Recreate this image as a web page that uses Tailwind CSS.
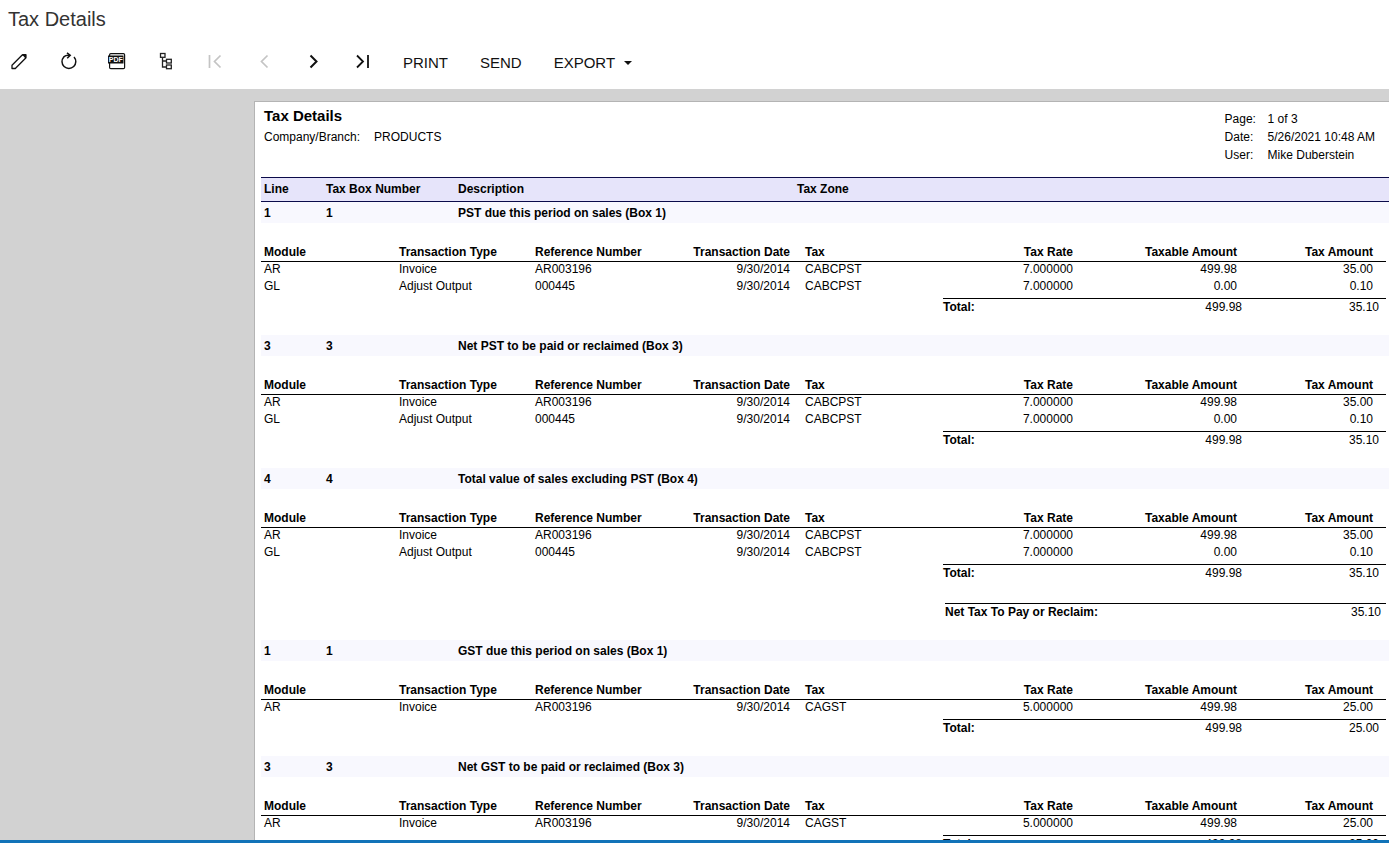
<!DOCTYPE html>
<html lang="en">
<head>
<meta charset="utf-8">
<meta name="viewport" content="width=device-width, initial-scale=1">
<title>Tax Details</title>
<script src="https://cdn.jsdelivr.net/npm/@tailwindcss/browser@4"></script>
</head>
<body class="flex h-screen flex-col overflow-hidden bg-white font-['Liberation_Sans',Arial,sans-serif] text-xs text-black">
<header class="flex h-[89px] shrink-0 flex-col">
  <h1 class="px-2 pt-1 text-xl leading-[30px] text-[#333]">Tax Details</h1>
  <div role="toolbar" aria-label="Report actions" class="mt-4 flex h-6 items-center gap-[25px] pl-[7px]">
    <button type="button" aria-label="Edit" class="size-6"><svg viewBox="0 0 24 24" class="size-6" fill="none" stroke="#111" stroke-width="1.300" stroke-linejoin="round"><path d="M5 18.500V15.200L15.200 5H18.500V8.300L8.300 18.500z"/><path d="M15.800 4.600L18.900 7.700V4.600z" fill="#111"/></svg></button>
    <button type="button" aria-label="Refresh" class="size-6"><svg viewBox="0 0 24 24" class="size-6" fill="none" stroke="#111" stroke-width="1.500"><path d="M18 6.900a6.900 6.900 0 1 1-10.200 0q1.700-1.700 5.200-1.600"/><path d="M11 2.800l3.200 2.500-3 2.900"/></svg></button>
    <button type="button" aria-label="View PDF" class="size-6"><svg viewBox="0 0 24 24" class="size-6"><rect x="4.600" y="3.600" width="15" height="15" rx="1.200" fill="#fff" stroke="#111" stroke-width="1.200"/><rect x="3" y="5.500" width="15.500" height="8" fill="#111"/><text x="10.800" y="12.200" text-anchor="middle" font-size="7" font-weight="700" fill="#fff">PDF</text></svg></button>
    <button type="button" aria-label="Groups" class="size-6"><svg viewBox="0 0 24 24" class="size-6" fill="none" stroke="#222" stroke-width="1.300"><rect x="6.500" y="3.500" width="4.500" height="3.800"/><path d="M8.500 7.500v9.500H12M8.500 11H12"/><rect x="12.500" y="9.300" width="4.800" height="3.700"/><rect x="12.500" y="15" width="4.800" height="3.700"/></svg></button>
    <button type="button" aria-label="First page" disabled class="size-6"><svg viewBox="0 0 24 24" class="size-6" fill="none" stroke="#c4c4c4" stroke-width="1.700"><path d="M6.500 5v13M17.500 5.500l-6 6 6 6"/></svg></button>
    <button type="button" aria-label="Previous page" disabled class="size-6"><svg viewBox="0 0 24 24" class="size-6" fill="none" stroke="#c4c4c4" stroke-width="1.700"><path d="M15.500 5.500l-6 6 6 6"/></svg></button>
    <button type="button" aria-label="Next page" class="size-6"><svg viewBox="0 0 24 24" class="size-6" fill="none" stroke="#111" stroke-width="2"><path d="M9.500 5.500l6 6-6 6"/></svg></button>
    <button type="button" aria-label="Last page" class="size-6"><svg viewBox="0 0 24 24" class="size-6" fill="none" stroke="#111" stroke-width="1.800"><path d="M7 5.500l6 6-6 6M18 5v13"/></svg></button>
    <div class="ml-1 flex gap-8 pt-[2px] text-[15px] leading-6 text-[#111]">
      <button type="button">PRINT</button>
      <button type="button">SEND</button>
      <button type="button" aria-haspopup="menu" class="flex items-center gap-[9px]">EXPORT<svg viewBox="0 0 8 4" class="h-1 w-2"><path d="M0 0h8L4 4z" fill="#111"/></svg></button>
    </div>
  </div>
</header>
<main class="flex min-h-0 flex-1 overflow-hidden border-b-[3px] border-[#1173b8] bg-[#d2d2d2] pt-3 pl-[254px]">
  <article class="min-w-0 flex-1 self-start border-t border-l border-[#b4b4b4] bg-white pl-[6px]">
    <div class="flex h-[75px] justify-between pt-1 pr-[14px] pl-[3px]">
      <div>
        <h2 class="text-[15px] leading-5 font-bold">Tax Details</h2>
        <dl class="flex gap-[14px] pt-[3px] leading-4"><dt>Company/Branch:</dt><dd>PRODUCTS</dd></dl>
      </div>
      <dl class="grid grid-cols-[43px_auto] content-start pt-1 leading-[18px]">
        <dt>Page:</dt><dd>1 of 3</dd>
        <dt>Date:</dt><dd>5/26/2021 10:48 AM</dd>
        <dt>User:</dt><dd>Mike Duberstein</dd>
      </dl>
    </div>
    <div class="grid grid-cols-[62px_132px_339px_1fr] border-y border-[#0b0b4a] bg-[#e6e4fa] pl-[3px] leading-[23px] font-bold">
      <span>Line</span><span>Tax Box Number</span><span>Description</span><span>Tax Zone</span>
    </div>
    <div id="sections"></div>
  </article>
</main>
<script>
const ar = (tax, rate, amount) => ['AR', 'Invoice', 'AR003196', '9/30/2014', tax, rate, '499.98', amount];
const gl = ['GL', 'Adjust Output', '000445', '9/30/2014', 'CABCPST', '7.000000', '0.00', '0.10'];
const pst = [ar('CABCPST', '7.000000', '35.00'), gl];
const gst = [ar('CAGST', '5.000000', '25.00')];
const sections = [
  { line: '1', title: 'PST due this period on sales (Box 1)', rows: pst, total: '35.10' },
  { line: '3', title: 'Net PST to be paid or reclaimed (Box 3)', rows: pst, total: '35.10' },
  { line: '4', title: 'Total value of sales excluding PST (Box 4)', rows: pst, total: '35.10', net: '35.10' },
  { line: '1', title: 'GST due this period on sales (Box 1)', rows: gst, total: '25.00' },
  { line: '3', title: 'Net GST to be paid or reclaimed (Box 3)', rows: gst, total: '25.00' }
];
const heads = ['Module', 'Transaction Type', 'Reference Number', 'Transaction Date', 'Tax', 'Tax Rate', 'Taxable Amount', 'Tax Amount'];
const align = ['pl-[3px] text-left', 'pl-[3px] text-left', 'pl-[3px] text-left', 'text-right', 'pl-[15px] text-left', 'text-right', 'text-right', 'pr-[13px] text-right'];
const row = r => `<tr class="h-[17px]">${r.map((c, i) => `<td class="${align[i]}">${c}</td>`).join('')}</tr>`;
document.getElementById('sections').innerHTML = sections.map(s => `
<section class="pb-5">
  <h3 class="grid grid-cols-[62px_132px_1fr] bg-[#f8f8fe] pt-px pl-[3px] leading-5 font-bold"><span>${s.line}</span><span>${s.line}</span><span>${s.title}</span></h3>
  <div class="pt-5 pr-[3px]">
    <table class="w-full table-fixed border-collapse leading-[15px]">
      <colgroup><col class="w-[135px]"><col class="w-[136px]"><col class="w-[136px]"><col class="w-[122px]"><col><col class="w-[130px]"><col class="w-[164px]"><col class="w-[149px]"></colgroup>
      <thead><tr class="h-[18px] border-b border-black">${heads.map((h, i) => `<th scope="col" class="pt-[2px] whitespace-nowrap ${align[i]}">${h}</th>`).join('')}</tr></thead>
      <tbody>${s.rows.map(row).join('')}</tbody>
    </table>
    <div class="mt-[3px] ml-auto grid w-[443px] grid-cols-[1fr_auto_137px] border-t border-black pr-[7px] text-right leading-4"><strong class="text-left">Total:</strong><span>499.98</span><span>${s.total}</span></div>
  </div>
  ${s.net ? `<div class="mt-[22px] ml-auto mr-[3px] flex w-[441px] justify-between border-t border-black pr-[5px] leading-4"><strong>Net Tax To Pay or Reclaim:</strong><span>${s.net}</span></div>` : ''}
</section>`).join('');
</script>
</body>
</html>
